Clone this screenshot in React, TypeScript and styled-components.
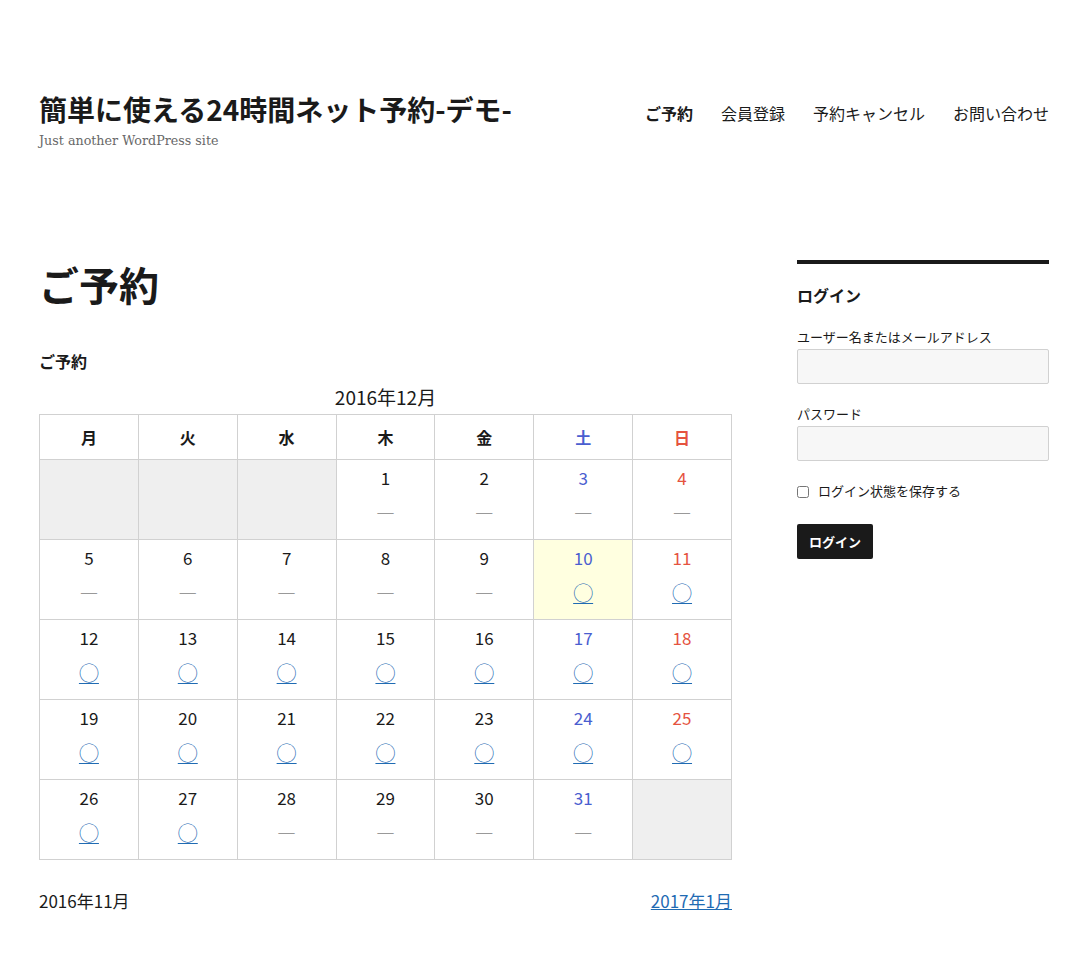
import React from "react";
import styled, { createGlobalStyle } from "styled-components";

const Global = createGlobalStyle`
  html, body { margin: 0; padding: 0; background: #fff; }
  body {
    font-family: "Noto Sans CJK JP", "Noto Sans", sans-serif;
    color: #1a1a1a;
  }
  * { box-sizing: border-box; }
`;

const Page = styled.div`
  padding: 0 42px 40px 39px;
  width: 1091px;
`;

const Header = styled.header`
  display: flex;
  justify-content: space-between;
  align-items: flex-start;
  padding-top: 91px;
  height: 258px;
`;

const Branding = styled.div`
  display: flex;
  flex-direction: column;
`;

const SiteTitle = styled.h1`
  margin: 0;
  font-size: 28px;
  line-height: 36px;
  font-weight: 700;
  letter-spacing: 0;
`;

const Tagline = styled.p`
  margin: 4px 0 0;
  font-family: "DejaVu Serif", "Liberation Serif", serif;
  font-size: 12.7px;
  line-height: 20px;
  color: #686868;
`;

const Nav = styled.nav`
  display: flex;
  gap: 28px;
  padding-top: 10px;
`;

const NavItem = styled.a<{ $current?: boolean }>`
  font-size: 16px;
  line-height: 24px;
  color: #1a1a1a;
  text-decoration: none;
  font-weight: ${(p) => (p.$current ? 700 : 400)};
`;

const Body = styled.div`
  display: flex;
  gap: 65px;
  align-items: flex-start;
`;

const Main = styled.main`
  width: 693px;
  flex-shrink: 0;
`;

const PageTitle = styled.h2`
  margin: 0;
  font-size: 40px;
  line-height: 52px;
  font-weight: 700;
`;

const SectionTitle = styled.h3`
  margin: 38px 0 0;
  font-size: 16px;
  line-height: 26px;
  font-weight: 700;
`;

const Caption = styled.div`
  text-align: center;
  font-size: 19px;
  line-height: 26px;
  margin-top: 10px;
  margin-bottom: 4px;
`;

const Table = styled.table`
  width: 693px;
  border-collapse: collapse;
  table-layout: fixed;
  margin-top: 1px;
`;

const Th = styled.th<{ $color: string }>`
  border: 1px solid #d1d1d1;
  height: 45px;
  font-size: 16px;
  font-weight: 700;
  text-align: center;
  color: ${(p) => p.$color};
  padding: 0;
`;

const Td = styled.td<{ $bg: string }>`
  border: 1px solid #d1d1d1;
  height: 80px;
  vertical-align: top;
  text-align: center;
  padding: 6px 0 0;
  background: ${(p) => p.$bg};
`;

const DayNum = styled.div<{ $color: string }>`
  font-size: 17px;
  line-height: 24px;
  color: ${(p) => p.$color};
`;

const Mark = styled.div`
  margin-top: 9px;
  font-size: 19px;
  font-weight: 700;
  line-height: 28px;
  color: #999;
`;

const Circle = styled.a`
  font-size: 20px;
  font-weight: 400;
  line-height: 28px;
  color: #1f6bb3;
  text-decoration: underline;
  text-decoration-thickness: 1px;
  text-underline-offset: 2px;
`;

const MonthNav = styled.div`
  display: flex;
  justify-content: space-between;
  margin-top: 29px;
  font-size: 17px;
  line-height: 24px;
`;

const MonthLink = styled.a`
  color: #1f6bb3;
  text-decoration: underline;
`;

const Sidebar = styled.aside`
  width: 252px;
  border-top: 4px solid #1a1a1a;
  margin-top: 2px;
  padding-top: 21px;
`;

const WidgetTitle = styled.h2`
  margin: 0 0 23px;
  font-size: 16px;
  line-height: 20px;
  font-weight: 700;
`;

const Field = styled.div`
  display: flex;
  flex-direction: column;
  gap: 1px;
  margin-bottom: 21px;
`;

const Label = styled.label`
  font-family: "Liberation Serif", "Noto Sans CJK JP", serif;
  font-size: 13px;
  line-height: 20px;
  color: #1a1a1a;
`;

const Input = styled.input`
  width: 252px;
  height: 35px;
  background: #f7f7f7;
  border: 1px solid #d1d1d1;
  border-radius: 2px;
  padding: 0 10px;
`;

const RememberRow = styled.label`
  display: flex;
  align-items: center;
  gap: 9px;
  font-family: "Liberation Serif", "Noto Sans CJK JP", serif;
  font-size: 13px;
  line-height: 20px;
  margin-top: 0;
`;

const Check = styled.input`
  margin: 0;
  width: 12px;
  height: 12px;
`;

const Button = styled.button`
  margin-top: 22px;
  height: 35px;
  padding: 0 12px;
  border: 0;
  border-radius: 2px;
  background: #1a1a1a;
  color: #fff;
  font-family: "Noto Sans CJK JP", sans-serif;
  font-weight: 700;
  font-size: 13px;
`;

const BLUE = "#4a5ed0";
const RED = "#e5533f";
const BLACK = "#1a1a1a";

const days = ["月", "火", "水", "木", "金", "土", "日"];
const dayColor = (i: number) => (i === 5 ? BLUE : i === 6 ? RED : BLACK);

type Cell = { n: number; open: boolean } | null;

const openDays = new Set([10, 11, 12, 13, 14, 15, 16, 17, 18, 19, 20, 21, 22, 23, 24, 25, 26, 27]);

const buildWeeks = (): Cell[][] => {
  const cells: Cell[] = [null, null, null];
  for (let d = 1; d <= 31; d++) cells.push({ n: d, open: openDays.has(d) });
  cells.push(null);
  const weeks: Cell[][] = [];
  for (let i = 0; i < cells.length; i += 7) weeks.push(cells.slice(i, i + 7));
  return weeks;
};

export default function App() {
  const weeks = buildWeeks();
  return (
    <Page>
      <Global />
      <Header>
        <Branding>
          <SiteTitle>簡単に使える24時間ネット予約-デモ-</SiteTitle>
          <Tagline>Just another WordPress site</Tagline>
        </Branding>
        <Nav>
          <NavItem $current>ご予約</NavItem>
          <NavItem>会員登録</NavItem>
          <NavItem>予約キャンセル</NavItem>
          <NavItem>お問い合わせ</NavItem>
        </Nav>
      </Header>
      <Body>
        <Main>
          <PageTitle>ご予約</PageTitle>
          <SectionTitle>ご予約</SectionTitle>
          <Caption>2016年12月</Caption>
          <Table>
            <thead>
              <tr>
                {days.map((d, i) => (
                  <Th key={d} $color={dayColor(i)}>
                    {d}
                  </Th>
                ))}
              </tr>
            </thead>
            <tbody>
              {weeks.map((w, wi) => (
                <tr key={wi}>
                  {w.map((c, ci) => (
                    <Td
                      key={ci}
                      $bg={!c ? "#efefef" : c.n === 10 ? "#ffffe0" : "#fff"}
                    >
                      {c && (
                        <>
                          <DayNum $color={dayColor(ci)}>{c.n}</DayNum>
                          <Mark>{c.open ? <Circle href="#">◯</Circle> : "―"}</Mark>
                        </>
                      )}
                    </Td>
                  ))}
                </tr>
              ))}
            </tbody>
          </Table>
          <MonthNav>
            <span>2016年11月</span>
            <MonthLink href="#">2017年1月</MonthLink>
          </MonthNav>
        </Main>
        <Sidebar>
          <WidgetTitle>ログイン</WidgetTitle>
          <Field>
            <Label>ユーザー名またはメールアドレス</Label>
            <Input type="text" />
          </Field>
          <Field>
            <Label>パスワード</Label>
            <Input type="password" />
          </Field>
          <RememberRow>
            <Check type="checkbox" />
            ログイン状態を保存する
          </RememberRow>
          <Button>ログイン</Button>
        </Sidebar>
      </Body>
    </Page>
  );
}
